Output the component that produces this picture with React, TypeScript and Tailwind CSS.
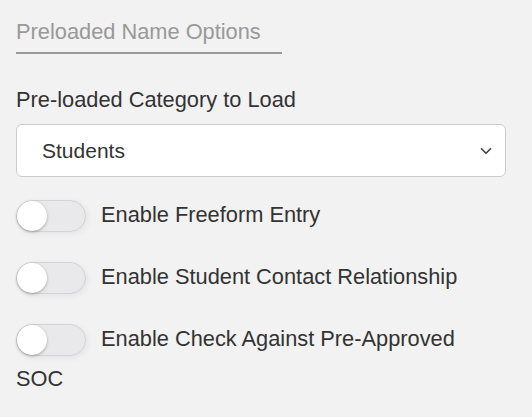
import { ChevronDown } from "lucide-react";

function Toggle() {
  return (
    <span className="relative inline-block align-middle w-[70px] h-[32px] rounded-full bg-[#e9e9eb] border border-[#d4d4d6] shadow-[2px_2px_6px_rgba(0,0,0,0.06)] mr-[15px]">
      <span className="absolute left-0 top-0 w-[30px] h-[30px] rounded-full bg-white shadow-[0_1px_3px_rgba(0,0,0,0.3)]" />
    </span>
  );
}

export default function App() {
  const rows = [
    "Enable Freeform Entry",
    "Enable Student Contact Relationship",
    "Enable Check Against Pre-Approved SOC",
  ];

  return (
    <div className="min-h-screen bg-[#f2f2f2] px-4 pt-[18px] font-['Liberation_Sans',Arial,sans-serif] text-[#333]">
      <div className="w-[266px] border-b-2 border-[#999] pb-[6px] text-[21.8px] leading-[28px] text-[#999]">
        Preloaded Name Options
      </div>

      <label className="block mt-[34px] text-[21.8px] leading-[24px]">
        Pre-loaded Category to Load
      </label>
      <div className="relative mt-[12px] w-[490px] h-[53px] rounded-[6px] border border-[#ccc] bg-white flex items-center pl-[25px] text-[21px]">
        Students
        <ChevronDown className="absolute right-[10px] top-[17px] size-[18px] text-[#444]" strokeWidth={2.2} />
      </div>

      <div className="mt-[18px] flex flex-col gap-[22px]">
        {rows.map((r) => (
          <div key={r} className="text-[21.8px] leading-[40px] pr-[20px]">
            <Toggle />
            {r}
          </div>
        ))}
      </div>
    </div>
  );
}
